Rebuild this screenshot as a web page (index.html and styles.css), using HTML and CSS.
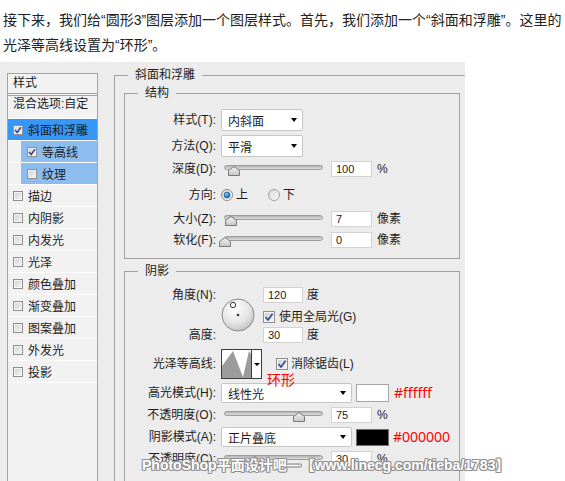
FILE: index.html
```html
<!DOCTYPE html>
<html lang="zh-CN">
<head>
<meta charset="utf-8">
<title>斜面和浮雕</title>
<link rel="stylesheet" href="styles.css">
</head>
<body>
<svg class="defs" width="0" height="0" aria-hidden="true">
  <defs>
    <linearGradient id="thumbGrad" x1="0" y1="0" x2="0" y2="1">
      <stop offset="0" stop-color="#f6f6f6"/>
      <stop offset="1" stop-color="#c4c4c4"/>
    </linearGradient>
    <radialGradient id="dialGrad" cx="40%" cy="30%" r="80%">
      <stop offset="0" stop-color="#ffffff"/>
      <stop offset="0.55" stop-color="#e6e6e6"/>
      <stop offset="1" stop-color="#b9b9b9"/>
    </radialGradient>
    <linearGradient id="radioGrad" x1="0" y1="0" x2="1" y2="1">
      <stop offset="0" stop-color="#d8d8d8"/>
      <stop offset="1" stop-color="#fafafa"/>
    </linearGradient>
    <radialGradient id="dotGrad" cx="40%" cy="35%" r="70%">
      <stop offset="0" stop-color="#7ec8ff"/>
      <stop offset="1" stop-color="#0a5aa6"/>
    </radialGradient>
  </defs>
</svg>

<p class="intro">接下来，我们给“圆形3”图层添加一个图层样式。首先，我们添加一个“斜面和浮雕”。这里的<br>光泽等高线设置为“环形”。</p>

<div class="dialog">
  <div class="side">
    <div class="side-head">样式</div>
    <div class="side-blend">混合选项:自定</div>
    <div class="side-row selected"><span class="cb"><svg width="8" height="8" viewBox="0 0 8 8"><path d="M1 4 L3.2 6.5 L7 1.2" fill="none" stroke="#2d4795" stroke-width="1.5"/></svg></span>斜面和浮雕</div>
    <div class="side-row sub"><div class="sub-hl"><span class="cb"><svg width="8" height="8" viewBox="0 0 8 8"><path d="M1 4 L3.2 6.5 L7 1.2" fill="none" stroke="#2d4795" stroke-width="1.5"/></svg></span>等高线</div></div>
    <div class="side-row sub"><div class="sub-hl"><span class="cb"></span>纹理</div></div>
    <div class="side-row"><span class="cb"></span>描边</div>
    <div class="side-row"><span class="cb"></span>内阴影</div>
    <div class="side-row"><span class="cb"></span>内发光</div>
    <div class="side-row"><span class="cb"></span>光泽</div>
    <div class="side-row"><span class="cb"></span>颜色叠加</div>
    <div class="side-row"><span class="cb"></span>渐变叠加</div>
    <div class="side-row"><span class="cb"></span>图案叠加</div>
    <div class="side-row"><span class="cb"></span>外发光</div>
    <div class="side-row"><span class="cb"></span>投影</div>
  </div>

  <div class="main">
    <div class="group outer">
      <div class="legend">斜面和浮雕</div>

      <div class="group inner">
        <div class="legend">结构</div>

        <div class="row tall gap8">
          <span class="lbl">样式(T):</span>
          <div class="select narrow"><span>内斜面</span><i class="arrow"></i></div>
        </div>
        <div class="row tall gap4">
          <span class="lbl">方法(Q):</span>
          <div class="select narrow"><span>平滑</span><i class="arrow"></i></div>
        </div>
        <div class="row gap4">
          <span class="lbl">深度(D):</span>
          <div class="slider"><div class="track"></div><svg class="thumb" style="left:9px" width="12" height="10" viewBox="0 0 12 10"><path d="M6 0.5 L11.5 4.5 V9.5 H0.5 V4.5 Z" fill="url(#thumbGrad)" stroke="#7a7a7a"/></svg></div>
          <div class="num">100</div><span class="unit">%</span>
        </div>
        <div class="row gap10">
          <span class="lbl">方向:</span>
          <svg class="radio" width="12" height="12" viewBox="0 0 12 12"><circle cx="6" cy="6" r="5.5" fill="url(#radioGrad)" stroke="#8c8c8c"/><circle cx="6" cy="6" r="3" fill="url(#dotGrad)" stroke="#124f8a" stroke-width="0.6"/></svg>
          <span class="radio-text">上</span>
          <svg class="radio second" width="12" height="12" viewBox="0 0 12 12"><circle cx="6" cy="6" r="5.5" fill="url(#radioGrad)" stroke="#a0a0a0"/></svg>
          <span class="radio-text">下</span>
        </div>
        <div class="row gap8">
          <span class="lbl">大小(Z):</span>
          <div class="slider"><div class="track"></div><svg class="thumb" style="left:6px" width="12" height="10" viewBox="0 0 12 10"><path d="M6 0.5 L11.5 4.5 V9.5 H0.5 V4.5 Z" fill="url(#thumbGrad)" stroke="#7a7a7a"/></svg></div>
          <div class="num">7</div><span class="unit">像素</span>
        </div>
        <div class="row gap5">
          <span class="lbl">软化(F):</span>
          <div class="slider"><div class="track"></div><svg class="thumb" style="left:0px" width="12" height="10" viewBox="0 0 12 10"><path d="M6 0.5 L11.5 4.5 V9.5 H0.5 V4.5 Z" fill="url(#thumbGrad)" stroke="#7a7a7a"/></svg></div>
          <div class="num">0</div><span class="unit">像素</span>
        </div>
      </div>

      <div class="group inner shade">
        <div class="legend">阴影</div>

        <div class="angle gap8">
          <span class="lbl a-r1">角度(N):</span>
          <svg class="dial" width="34" height="34" viewBox="0 0 34 34"><circle cx="17" cy="17" r="16" fill="url(#dialGrad)" stroke="#8a8a8a"/><circle cx="12" cy="7" r="2.7" fill="#fff" stroke="#3a3a3a"/><circle cx="17" cy="17" r="1.3" fill="#333"/></svg>
          <div class="a-c3 a-r1 inline"><div class="num small">120</div><span class="unit small">度</span></div>
          <div class="a-c3 a-r2 inline"><span class="cb lg"><svg width="10" height="10" viewBox="0 0 10 10"><path d="M1.5 5 L4 8 L8.6 1.8" fill="none" stroke="#34498f" stroke-width="1.7"/></svg></span><span class="cb-text">使用全局光(G)</span></div>
          <span class="lbl a-r3">高度:</span>
          <div class="a-c3 a-r3 inline"><div class="num small">30</div><span class="unit small">度</span></div>
        </div>

        <div class="row contour gap6">
          <span class="lbl">光泽等高线:</span>
          <div class="contour-box">
            <svg width="29" height="28" viewBox="0 0 29 28"><path d="M0 28 V16 L11 1 L21 27 L27 1 L29 4 V28 Z" fill="#9c9c9c"/></svg>
            <div class="contour-drop"><i class="arrow small"></i></div>
          </div>
          <div class="cb-line"><span class="cb lg"><svg width="10" height="10" viewBox="0 0 10 10"><path d="M1.5 5 L4 8 L8.6 1.8" fill="none" stroke="#34498f" stroke-width="1.7"/></svg></span><span class="cb-text">消除锯齿(L)</span></div>
          <span class="note">环形</span>
        </div>

        <div class="row mode gap6">
          <span class="lbl">高光模式(H):</span>
          <div class="select wide"><span>线性光</span><i class="arrow"></i></div>
          <div class="swatch"></div>
          <span class="hex">#ffffff</span>
        </div>
        <div class="row gap6">
          <span class="lbl">不透明度(O):</span>
          <div class="slider"><div class="track"></div><svg class="thumb" style="left:74px" width="12" height="10" viewBox="0 0 12 10"><path d="M6 0.5 L11.5 4.5 V9.5 H0.5 V4.5 Z" fill="url(#thumbGrad)" stroke="#7a7a7a"/></svg></div>
          <div class="num">75</div><span class="unit">%</span>
        </div>
        <div class="row mode gap6">
          <span class="lbl">阴影模式(A):</span>
          <div class="select wide"><span>正片叠底</span><i class="arrow"></i></div>
          <div class="swatch black"></div>
          <span class="hex black-hex">#000000</span>
        </div>
        <div class="row gap6">
          <span class="lbl">不透明度(C):</span>
          <div class="slider"><div class="track"></div><svg class="thumb" style="left:30px" width="12" height="10" viewBox="0 0 12 10"><path d="M6 0.5 L11.5 4.5 V9.5 H0.5 V4.5 Z" fill="url(#thumbGrad)" stroke="#7a7a7a"/></svg></div>
          <div class="num">30</div><span class="unit">%</span>
        </div>
      </div>
    </div>
  </div>
</div>

<div class="watermark">PhotoShop平面设计吧—【www.linecg.com/tieba/1783】</div>
</body>
</html>
```

FILE: styles.css
```css
html, body {
  margin: 0;
  padding: 0;
}

body {
  position: relative;
  width: 565px;
  height: 481px;
  overflow: hidden;
  background: #ffffff;
  color: #1c1c1c;
  font-family: "Liberation Sans", "Noto Sans CJK SC", sans-serif;
}

.defs {
  display: block;
  width: 0;
  height: 0;
  overflow: hidden;
}

.intro {
  margin: 0;
  padding: 8px 0 0 3px;
  font-size: 14px;
  line-height: 25px;
  white-space: nowrap;
  color: #222;
}

/* dialog */
.dialog {
  margin-top: 4px;
  width: 465px;
  height: 419px;
  background: #ececec;
  display: flex;
  align-items: flex-start;
  overflow: hidden;
  font-size: 12px;
}

/* left list */
.side {
  flex: none;
  margin: 11px 0 0 7px;
  width: 91px;
  height: 430px;
  box-sizing: border-box;
  border: 1px solid #a3a3a3;
  background: #f2f2f2;
}

.side-head {
  height: 19px;
  line-height: 19px;
  padding-left: 5px;
  border-bottom: 1px solid #a3a3a3;
}

.side-blend {
  margin-top: 1px;
  border-top: 1px solid #a3a3a3;
  border-bottom: 1px solid #ffffff;
  height: 22px;
  line-height: 17px;
  padding-left: 5px;
}

.side-row {
  display: flex;
  align-items: center;
  height: 21px;
  border-bottom: 1px solid #ffffff;
  padding-left: 5px;
}

.side-row.selected {
  background: #3797f7;
}

.side-row.sub {
  padding-left: 13px;
}

.sub-hl {
  flex: 1;
  align-self: stretch;
  display: flex;
  align-items: center;
  padding-left: 6px;
  background: #8dbdee;
}

.cb {
  flex: none;
  display: flex;
  align-items: center;
  justify-content: center;
  width: 10px;
  height: 10px;
  margin-right: 5px;
  box-sizing: border-box;
  border: 1px solid #8e8f8f;
  box-shadow: inset 0 0 0 1px #f4f4f4;
  background: linear-gradient(135deg, #cfcfcf, #f7f7f7);
}

.cb.lg {
  width: 12px;
  height: 12px;
  margin-right: 0;
}

.cb-text {
  margin-left: 4px;
  line-height: 16px;
}

/* right side */
.main {
  flex: none;
  margin: 13px 0 0 16px;
}

.group {
  box-sizing: border-box;
  border: 1px solid #a2a2a2;
}

.outer {
  width: 370px;
  height: 500px;
  padding-left: 9px;
}

.legend {
  width: fit-content;
  margin-top: -9px;
  padding: 0 7px;
  line-height: 16px;
  background: #ececec;
}

.outer > .legend {
  margin-left: 4px;
}

.inner {
  width: 336px;
  margin-top: 10px;
  padding-bottom: 10px;
}

.inner > .legend {
  margin-left: 13px;
}

.inner.shade {
  margin-top: 12px;
  padding-bottom: 40px;
}

.row {
  display: flex;
  align-items: center;
  height: 16px;
}

.row.tall {
  height: 22px;
}

.gap4 { margin-top: 4px; }
.gap5 { margin-top: 5px; }
.gap6 { margin-top: 6px; }
.gap8 { margin-top: 8px; }
.gap10 { margin-top: 10px; }

.lbl {
  flex: none;
  width: 91px;
  text-align: right;
  line-height: 16px;
  white-space: nowrap;
}

.select {
  flex: none;
  display: flex;
  align-items: center;
  margin-left: 5px;
  height: 22px;
  box-sizing: border-box;
  padding-left: 6px;
  border: 1px solid #c6c6c6;
  border-radius: 2px;
  background: #ffffff;
}

.select.narrow {
  width: 82px;
}

.select.wide {
  width: 131px;
  height: 20px;
}

.arrow {
  margin-left: auto;
  margin-right: 5px;
  width: 0;
  height: 0;
  border-left: 3.5px solid transparent;
  border-right: 3.5px solid transparent;
  border-top: 4px solid #000000;
}

.arrow.small {
  margin: 0;
  border-left-width: 3px;
  border-right-width: 3px;
  border-top-width: 3px;
}

.slider {
  flex: none;
  position: relative;
  margin-left: 3px;
  width: 106px;
  height: 16px;
}

.track {
  margin: 4px 0 0 5px;
  width: 99px;
  height: 5px;
  box-sizing: border-box;
  border: 1px solid #9c9c9c;
  border-radius: 3px;
  background: linear-gradient(#b4b4b4, #dedede);
}

.thumb {
  position: absolute;
  top: 5px;
  display: block;
}

.num {
  flex: none;
  margin-left: 6px;
  width: 41px;
  height: 16px;
  box-sizing: border-box;
  padding-left: 4px;
  border: 1px solid #d2d2d2;
  background: #ffffff;
  font-size: 11px;
  line-height: 14px;
}

.num.small {
  margin-left: 0;
  width: 40px;
}

.unit {
  margin-left: 5px;
  line-height: 16px;
}

.unit.small {
  margin-left: 4px;
}

.radio {
  flex: none;
  display: block;
  margin-left: 5px;
}

.radio.second {
  margin-left: 20px;
}

.radio-text {
  margin-left: 3px;
  line-height: 16px;
}

/* angle block */
.angle {
  display: grid;
  grid-template-columns: 91px 47px auto;
  grid-template-rows: 16px 22px 18px;
  align-items: end;
}

.a-r1 { grid-row: 1; grid-column: 1; }
.a-r3 { grid-row: 3; grid-column: 1; }
.a-c3.a-r1 { grid-column: 3; grid-row: 1; }
.a-c3.a-r2 { grid-column: 3; grid-row: 2; }
.a-c3.a-r3 { grid-column: 3; grid-row: 3; }

.inline {
  display: flex;
  align-items: center;
  height: 16px;
}

.dial {
  grid-column: 2;
  grid-row: 1 / 4;
  align-self: center;
  margin-left: 5px;
  display: block;
}

/* contour */
.row.contour {
  position: relative;
  height: 30px;
}

.contour-box {
  flex: none;
  display: flex;
  margin-left: 5px;
  width: 41px;
  height: 30px;
  box-sizing: border-box;
  border: 1px solid #3c3c3c;
  background: #ffffff;
}

.contour-box svg {
  display: block;
}

.contour-drop {
  flex: 1;
  display: flex;
  align-items: center;
  justify-content: center;
  border-left: 1px solid #3c3c3c;
}

.cb-line {
  display: flex;
  align-items: center;
  margin-left: 14px;
}

.cb-line .cb-text {
  margin-left: 3px;
}

.note {
  position: absolute;
  left: 142px;
  top: 23px;
  color: #ff0000;
  font-size: 14px;
  line-height: 16px;
}

.swatch {
  flex: none;
  margin-left: 4px;
  width: 33px;
  height: 18px;
  box-sizing: border-box;
  border: 1px solid #a6a6a6;
  background: #ffffff;
}

.swatch.black {
  height: 17px;
  border-color: #6e6e6e;
  background: #000000;
}

.hex {
  margin-left: 5px;
  color: #ff0000;
  font-family: "Noto Sans", sans-serif;
  font-size: 14px;
  line-height: 16px;
}

.hex.black-hex {
  margin-left: 4px;
}

.watermark {
  position: absolute;
  left: 142px;
  top: 457px;
  font-size: 14px;
  font-weight: bold;
  line-height: 16px;
  white-space: nowrap;
  color: #ffffff;
  text-shadow:
    1px 0 #8e8e8e, -1px 0 #8e8e8e, 0 1px #8e8e8e, 0 -1px #8e8e8e,
    1px 1px #a0a0a0, -1px -1px #a0a0a0, 1px -1px #a0a0a0, -1px 1px #a0a0a0;
}
```
